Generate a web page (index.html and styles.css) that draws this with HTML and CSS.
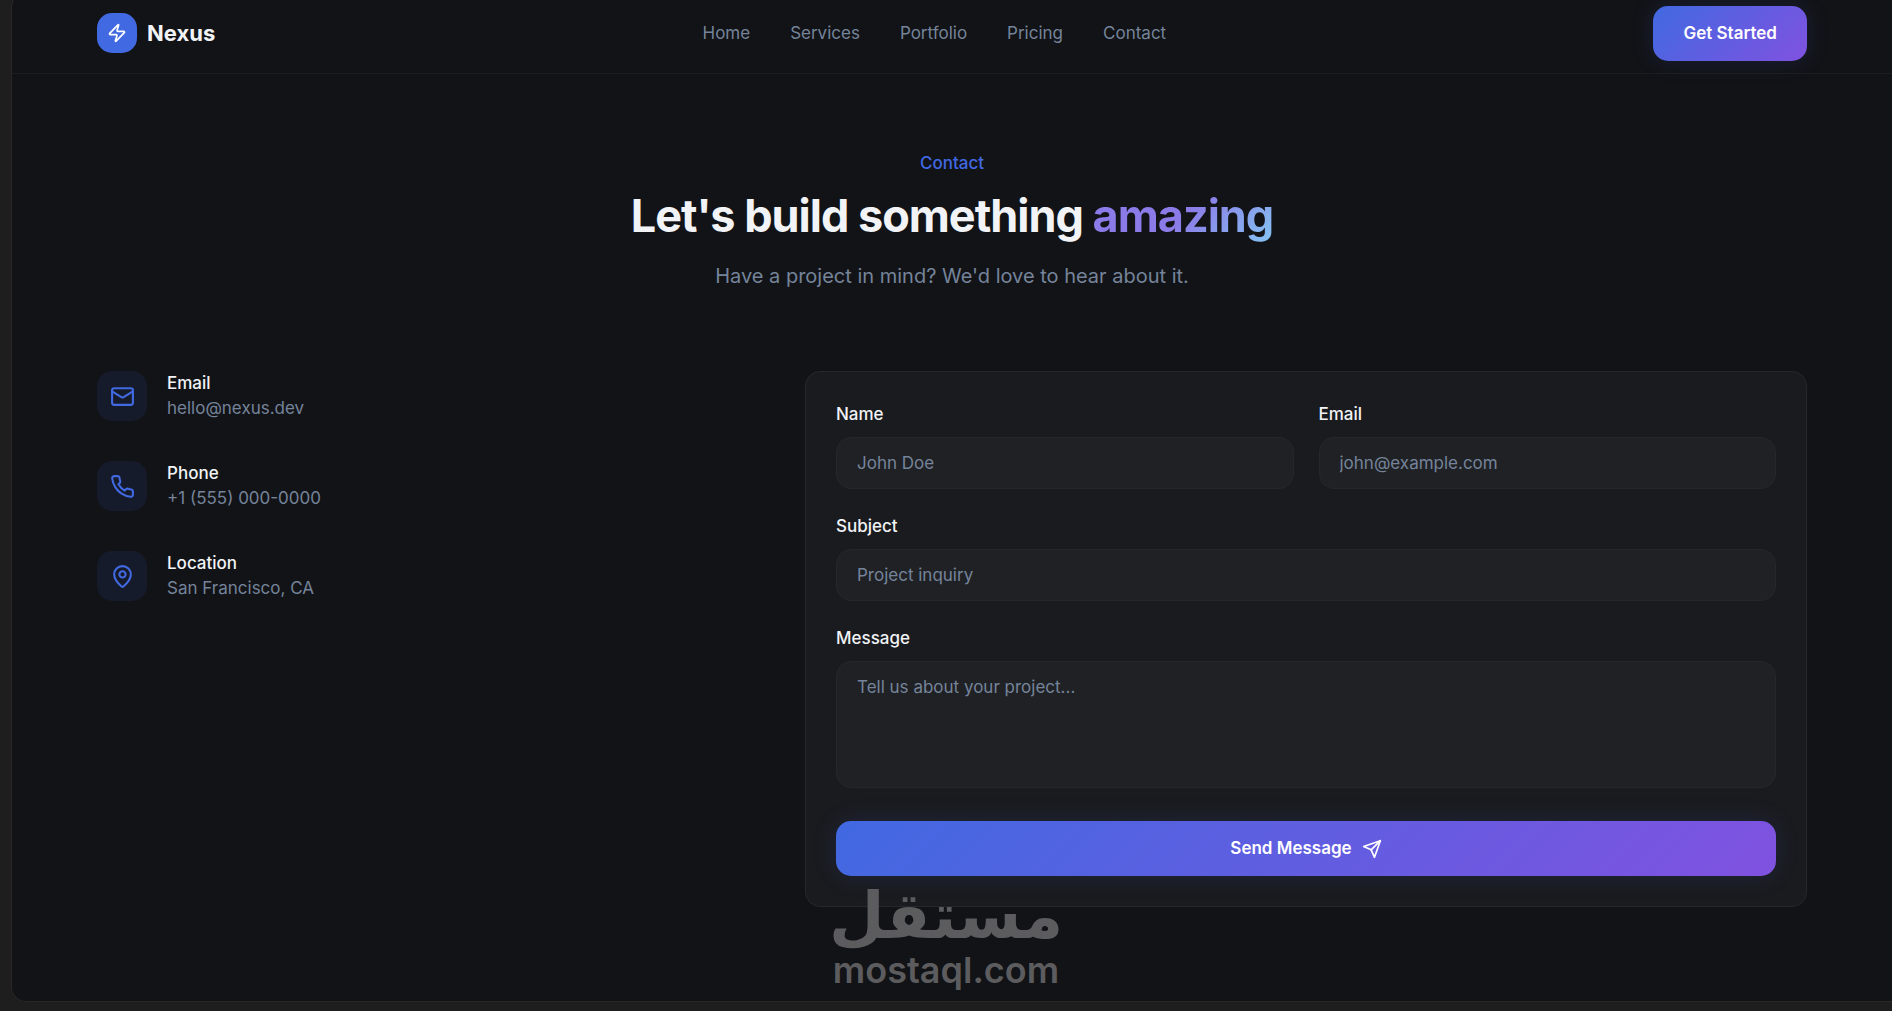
FILE: index.html
```html
<!DOCTYPE html>
<html lang="en">
<head>
  <meta charset="utf-8">
  <meta name="viewport" content="width=device-width, initial-scale=1">
  <title>Nexus – Contact</title>
  <link rel="stylesheet" href="styles.css">
</head>
<body>
  <div class="panel">
    <header class="header">
      <a class="brand" href="#">
        <span class="brand-mark">
          <svg class="icon icon-sm" viewBox="0 0 24 24" aria-hidden="true"><path d="M4 14a1 1 0 0 1-.78-1.63l9.9-10.2a.5.5 0 0 1 .86.46l-1.92 6.02A1 1 0 0 0 13 10h7a1 1 0 0 1 .78 1.63l-9.9 10.2a.5.5 0 0 1-.86-.46l1.92-6.02A1 1 0 0 0 11 14z"/></svg>
        </span>
        <span class="brand-name">Nexus</span>
      </a>
      <nav class="nav">
        <a href="#">Home</a>
        <a href="#">Services</a>
        <a href="#">Portfolio</a>
        <a href="#">Pricing</a>
        <a href="#">Contact</a>
      </nav>
      <button class="button" type="button">Get Started</button>
    </header>

    <main class="section">
      <div class="intro">
        <p class="eyebrow">Contact</p>
        <h1 class="title">Let's build something <span class="title-accent">amazing</span></h1>
        <p class="subtitle">Have a project in mind? We'd love to hear about it.</p>
      </div>

      <div class="columns">
        <ul class="contacts">
          <li class="contact">
            <span class="contact-icon">
              <svg class="icon" viewBox="0 0 24 24" aria-hidden="true"><rect width="20" height="16" x="2" y="4" rx="2"/><path d="m22 7-8.97 5.7a1.94 1.94 0 0 1-2.06 0L2 7"/></svg>
            </span>
            <div>
              <p class="contact-label">Email</p>
              <p class="contact-value">hello@nexus.dev</p>
            </div>
          </li>
          <li class="contact">
            <span class="contact-icon">
              <svg class="icon" viewBox="0 0 24 24" aria-hidden="true"><path d="M22 16.92v3a2 2 0 0 1-2.18 2 19.79 19.79 0 0 1-8.63-3.07 19.5 19.5 0 0 1-6-6 19.79 19.79 0 0 1-3.07-8.67A2 2 0 0 1 4.11 2h3a2 2 0 0 1 2 1.72 12.84 12.84 0 0 0 .7 2.81 2 2 0 0 1-.45 2.11L8.09 9.91a16 16 0 0 0 6 6l1.27-1.27a2 2 0 0 1 2.11-.45 12.84 12.84 0 0 0 2.81.7A2 2 0 0 1 22 16.92z"/></svg>
            </span>
            <div>
              <p class="contact-label">Phone</p>
              <p class="contact-value">+1 (555) 000-0000</p>
            </div>
          </li>
          <li class="contact">
            <span class="contact-icon">
              <svg class="icon" viewBox="0 0 24 24" aria-hidden="true"><path d="M20 10c0 4.993-5.539 10.193-7.399 11.799a1 1 0 0 1-1.202 0C9.539 20.193 4 14.993 4 10a8 8 0 0 1 16 0"/><circle cx="12" cy="10" r="3"/></svg>
            </span>
            <div>
              <p class="contact-label">Location</p>
              <p class="contact-value">San Francisco, CA</p>
            </div>
          </li>
        </ul>

        <form class="card">
          <div class="field-row">
            <div class="field">
              <label for="name">Name</label>
              <input id="name" type="text" placeholder="John Doe">
            </div>
            <div class="field">
              <label for="email">Email</label>
              <input id="email" type="email" placeholder="john@example.com">
            </div>
          </div>
          <div class="field">
            <label for="subject">Subject</label>
            <input id="subject" type="text" placeholder="Project inquiry">
          </div>
          <div class="field">
            <label for="message">Message</label>
            <textarea id="message" placeholder="Tell us about your project..."></textarea>
          </div>
          <button class="button button-wide" type="submit">
            Send Message
            <svg class="icon icon-sm" viewBox="0 0 24 24" aria-hidden="true"><path d="m22 2-7 20-4-9-9-4Z"/><path d="M22 2 11 13"/></svg>
          </button>
        </form>
      </div>
    </main>
  </div>

  <div class="watermark">
    <span class="watermark-ar" lang="ar" dir="rtl">مستقل</span>
    <span class="watermark-en">mostaql.com</span>
  </div>
</body>
</html>
```
FILE: styles.css
```css
:root {
  --page: #1e1e1e;
  --panel: #121317;
  --card: #1a1b1f;
  --input: #202125;
  --line: #26272d;
  --text: #f1f3f6;
  --muted: #75849a;
  --blue: #4169e1;
  --purple: #8052e0;
}

* {
  box-sizing: border-box;
}

body {
  position: relative;
  margin: 0;
  padding: 0 0 9px 11px;
  overflow-x: hidden;
  background: var(--page);
  color: var(--text);
  font: 400 17px/25px Inter, "Liberation Sans", sans-serif;
}

p,
h1,
ul {
  margin: 0;
  padding: 0;
}

a {
  color: inherit;
  text-decoration: none;
}

.panel {
  margin-top: -8px;
  background: var(--panel);
  border: 1px solid #2c2626;
  border-right: 0;
  border-radius: 15px 0 0 15px;
}

.icon {
  flex: none;
  width: 25px;
  height: 25px;
  fill: none;
  stroke: currentColor;
  stroke-width: 2;
  stroke-linecap: round;
  stroke-linejoin: round;
}

.icon-sm {
  width: 20px;
  height: 20px;
}

/* Header */

.header {
  display: flex;
  align-items: center;
  justify-content: space-between;
  height: 81px;
  padding: 0 85px;
  border-bottom: 1px solid #1c1d21;
}

.brand {
  display: flex;
  align-items: center;
  gap: 10px;
}

.brand-mark {
  display: grid;
  place-items: center;
  width: 40px;
  height: 40px;
  border-radius: 15px;
  background: var(--blue);
  color: #fff;
}

.brand-name {
  font-size: 22px;
  font-weight: 700;
}

.nav {
  display: flex;
  gap: 40px;
  color: var(--muted);
}

.button {
  display: flex;
  align-items: center;
  justify-content: center;
  gap: 10px;
  height: 55px;
  padding: 0 30px;
  border: 0;
  border-radius: 15px;
  background: linear-gradient(135deg, var(--blue), var(--purple));
  box-shadow: 0 0 25px rgba(65, 105, 225, 0.15);
  color: #fff;
  font: inherit;
  font-weight: 600;
}

/* Contact section */

.section {
  padding: 77px 85px 94px;
}

.intro {
  margin-bottom: 80px;
  text-align: center;
}

.eyebrow {
  margin-bottom: 15px;
  color: var(--blue);
  font-weight: 500;
}

.title {
  margin-bottom: 20px;
  font-size: 45px;
  font-weight: 700;
  letter-spacing: -1px;
  line-height: 50px;
}

.title-accent {
  background: linear-gradient(135deg, #8b7be8 50%, #85c5f2);
  background-clip: text;
  color: transparent;
}

.subtitle {
  color: var(--muted);
  font-size: 20px;
  line-height: 30px;
}

.columns {
  display: grid;
  grid-template-columns: repeat(5, minmax(0, 1fr));
  gap: 60px;
}

.contacts {
  display: flex;
  grid-column: span 2;
  flex-direction: column;
  gap: 40px;
  list-style: none;
}

.contact {
  display: flex;
  gap: 20px;
}

.contact-icon {
  display: grid;
  place-items: center;
  width: 50px;
  height: 50px;
  border-radius: 15px;
  background: #161b2b;
  color: var(--blue);
}

.contact-label {
  font-weight: 500;
}

.contact-value {
  color: var(--muted);
}

/* Form */

.card {
  display: flex;
  grid-column: span 3;
  flex-direction: column;
  gap: 25px;
  padding: 30px;
  background: var(--card);
  border: 1px solid var(--line);
  border-radius: 15px;
}

.field-row {
  display: grid;
  grid-template-columns: repeat(2, minmax(0, 1fr));
  gap: 25px;
}

.field {
  display: flex;
  flex-direction: column;
  gap: 10px;
}

.field label {
  font-weight: 500;
}

.field input,
.field textarea {
  display: block;
  width: 100%;
  height: 52px;
  padding: 13px 20px;
  border: 1px solid var(--line);
  border-radius: 15px;
  background: var(--input);
  color: var(--text);
  font: inherit;
}

.field textarea {
  height: 127px;
  resize: none;
}

.field ::placeholder {
  color: var(--muted);
  opacity: 1;
}

.button-wide {
  width: 100%;
  margin-top: 8px;
}

/* Watermark */

.watermark {
  position: absolute;
  right: 0;
  bottom: 18px;
  left: 0;
  display: flex;
  flex-direction: column;
  align-items: center;
  color: #5c5c5e;
  pointer-events: none;
}

.watermark-ar {
  font: 700 64px/64px "DejaVu Sans", sans-serif;
}

.watermark-en {
  font-size: 36px;
  font-weight: 600;
  line-height: 45px;
}
```
